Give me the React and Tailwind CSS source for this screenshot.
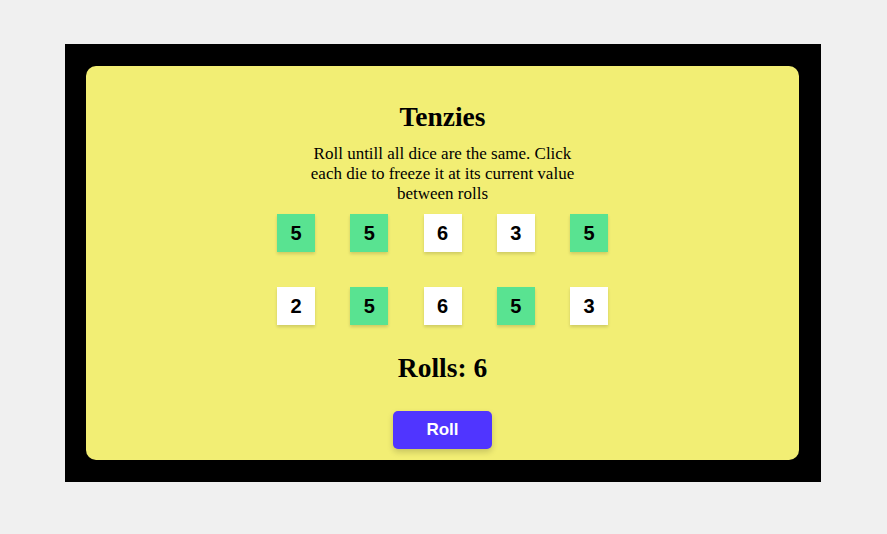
const dice = [
  { value: 5, held: true },
  { value: 5, held: true },
  { value: 6, held: false },
  { value: 3, held: false },
  { value: 5, held: true },
  { value: 2, held: false },
  { value: 5, held: true },
  { value: 6, held: false },
  { value: 5, held: true },
  { value: 3, held: false },
];

const Die = ({ value, held }) => {
  return (
    <div
      className={`flex h-[38px] w-[38px] items-center justify-center text-[20px] font-bold text-black shadow-[0_2px_3px_rgba(0,0,0,0.15)] ${
        held ? "bg-[#59e391]" : "bg-white"
      }`}
      style={{ fontFamily: '"Liberation Sans", Arial, sans-serif' }}
    >
      {value}
    </div>
  );
};

export default function App() {
  return (
    <div className="min-h-[534px] w-full bg-[#f0f0f0] pt-[44px] pl-[65px]">
      <main className="h-[438px] w-[756px] bg-black pt-[22px] pr-[22px] pb-[22px] pl-[21px]">
        <div
          className="flex h-[394px] w-[713px] flex-col items-center rounded-[10px] bg-[#f2ee74] pt-[35px] text-black"
          style={{ fontFamily: '"Liberation Serif", "Times New Roman", serif' }}
        >
          <h1 className="text-[27.5px] leading-[31px] font-bold">Tenzies</h1>

          <p className="mt-[12px] w-[280px] text-center text-[17px] leading-[20px]">
            Roll untill all dice are the same. Click each die to freeze it at
            its current value between rolls
          </p>

          <div className="mt-[10px] grid grid-cols-5 gap-x-[35.25px] gap-y-[35px]">
            {dice.map((d, i) => (
              <Die key={i} value={d.value} held={d.held} />
            ))}
          </div>

          <h2 className="mt-[27px] text-[27.5px] leading-[31px] font-bold">
            Rolls: 6
          </h2>

          <button
            className="mt-[28px] h-[38px] w-[99px] rounded-[5px] bg-[#5035ff] text-[17px] font-bold text-white shadow-[0_3px_6px_rgba(0,0,0,0.18)]"
            style={{ fontFamily: '"Liberation Sans", Arial, sans-serif' }}
          >
            Roll
          </button>
        </div>
      </main>
    </div>
  );
}
